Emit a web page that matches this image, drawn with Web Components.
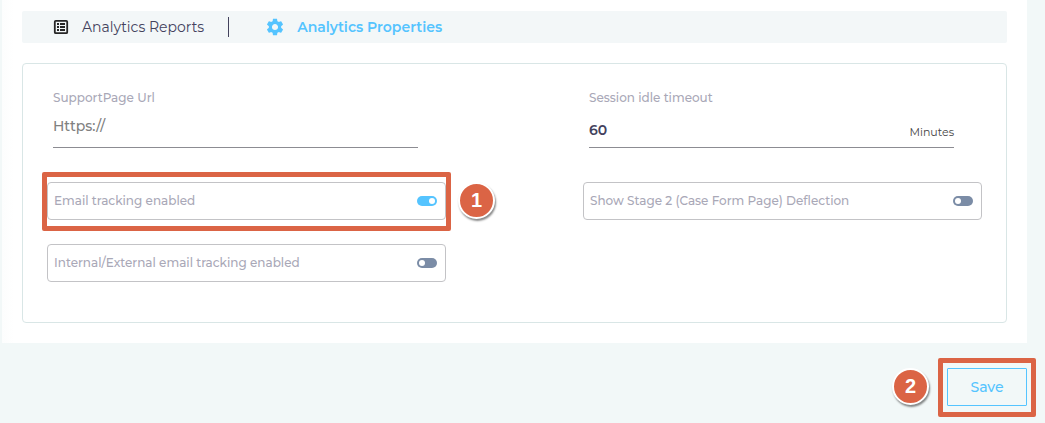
<!DOCTYPE html>
<html lang="en">
<head>
<meta charset="utf-8">
<title>Analytics Properties</title>
<style>
    body {
        margin: 0;
        background: #f2f8f8;
        color: #43425d;
        font-family: Montserrat, Inter, "Open Sans", sans-serif;
        font-weight: 500;
    }
</style>
</head>
<body>
<analytics-page></analytics-page>

<script>
function attach(element, html) {
    const template = document.createElement('template');
    template.innerHTML = html;
    element.attachShadow({mode: 'open'}).appendChild(template.content.cloneNode(true));
}

customElements.define('nav-tab',
class extends HTMLElement {
    constructor() {
        super();
        attach(this, `
        <style>
            :host { display: block; }
            a {
                display: flex;
                align-items: center;
                gap: 13px;
                color: #43425d;
                font-size: 14px;
                font-weight: 400;
                line-height: 20px;
                text-decoration: none;
            }
            :host([active]) a { color: #55c4ff; font-weight: 600; }
        </style>
        <a href="#"><slot name="icon"></slot><span><slot></slot></span></a>
        `);
    }
});

customElements.define('text-field',
class extends HTMLElement {
    constructor() {
        super();
        attach(this, `
        <style>
            :host { display: block; margin: 0 28px 10px 6px; }
            label {
                display: block;
                color: #a9a8b7;
                font-size: 12px;
                line-height: 18px;
            }
            .line {
                display: flex;
                align-items: center;
                box-sizing: border-box;
                height: 41px;
                padding-bottom: 2px;
                border-bottom: 1px solid #8c8c92;
            }
            :host([suffix]) .line { padding: 6px 0 0; }
            input {
                flex: 1;
                min-width: 0;
                padding: 0;
                border: 0;
                outline: 0;
                background: none;
                color: #43425d;
                font: inherit;
                font-size: 14px;
                font-weight: 600;
            }
            input::placeholder { color: #808080; opacity: 1; font-weight: 500; }
            .suffix { padding-top: 4px; color: #444; font-size: 11px; font-weight: 400; }
        </style>
        <label for="box">${this.getAttribute('label')}</label>
        <div class="line">
            <input id="box" type="text" placeholder="${this.getAttribute('placeholder') || ''}" value="${this.getAttribute('value') || ''}">
            <span class="suffix">${this.getAttribute('suffix') || ''}</span>
        </div>
        `);
    }
});

customElements.define('toggle-row',
class extends HTMLElement {
    constructor() {
        super();
        attach(this, `
        <style>
            :host { display: block; }
            label {
                display: flex;
                align-items: center;
                justify-content: space-between;
                box-sizing: border-box;
                height: 38px;
                padding: 0 8px 0 6px;
                border: 1px solid #c3c3c6;
                border-radius: 4px;
                background: #fff;
                color: #a9a8b7;
                font-size: 12px;
                line-height: 16px;
            }
            input {
                appearance: none;
                display: flex;
                align-items: center;
                box-sizing: border-box;
                width: 20px;
                height: 10px;
                margin: 0;
                padding: 0 2px;
                border-radius: 5px;
                background: #7b8ca6;
            }
            input::before {
                content: "";
                width: 6px;
                height: 6px;
                border-radius: 50%;
                background: #fff;
            }
            input:checked { justify-content: flex-end; background: #55c4ff; }
        </style>
        <label><span><slot></slot></span><input type="checkbox" ${this.hasAttribute('checked') ? 'checked' : ''}></label>
        `);
    }
});

// Red frame and numbered badge drawn over whatever is slotted in
customElements.define('step-mark',
class extends HTMLElement {
    constructor() {
        super();
        attach(this, `
        <style>
            :host { display: block; position: relative; }
            .frame {
                position: absolute;
                inset: -10px -5px -11px;
                border: 5px solid #db6445;
                border-radius: 2px;
                box-sizing: border-box;
                pointer-events: none;
            }
            .badge {
                position: absolute;
                top: 0;
                left: calc(100% + 12px);
                display: flex;
                align-items: center;
                justify-content: center;
                box-sizing: border-box;
                width: 37px;
                height: 37px;
                border: 2px solid #fff;
                border-radius: 50%;
                background: #db6445;
                box-shadow: 1px 2px 2px #0007;
                color: #fff;
                font: bold 20px "Liberation Sans", Arial, sans-serif;
            }
            :host([side="left"]) .frame { inset: -10px -9px -11px; }
            :host([side="left"]) .badge { left: auto; right: calc(100% + 18px); }
        </style>
        <slot></slot>
        <div class="frame"></div>
        <div class="badge">${this.getAttribute('step')}</div>
        `);
    }
});

customElements.define('outline-button',
class extends HTMLElement {
    constructor() {
        super();
        attach(this, `
        <style>
            :host { display: block; }
            button {
                display: block;
                width: 80px;
                height: 38px;
                padding: 0;
                border: 1px solid #55c4ff;
                border-radius: 1px;
                background: #f2f8f8;
                color: #55c4ff;
                font: inherit;
                font-size: 14px;
            }
        </style>
        <button type="button"><slot></slot></button>
        `);
    }
});

customElements.define('analytics-page',
class extends HTMLElement {
    constructor() {
        super();
        attach(this, `
        <style>
            :host { display: block; }
            main {
                margin: 0 18px 0 2px;
                padding: 11px 20px 20px;
                background: linear-gradient(to right, #fcfdfd, #fff 12px);
            }
            nav {
                display: flex;
                align-items: center;
                height: 32px;
                padding-left: 31px;
                margin-bottom: 20px;
                background: #f3f7f8;
                border-radius: 2px;
            }
            .divider { width: 1px; height: 20px; margin: 0 37px 0 24px; background: #43425d; }
            svg { display: block; flex: none; }
            .card {
                display: grid;
                grid-template-columns: 1fr 1fr;
                gap: 24px 137px;
                padding: 25px 24px 40px;
                border: 1px solid #d9e6e6;
                border-radius: 4px;
            }
            footer {
                display: flex;
                justify-content: flex-end;
                padding: 25px 18px 17px;
            }
        </style>
        <main>
            <nav>
                <nav-tab>
                    <svg slot="icon" width="16" height="16" viewBox="0 0 16 16">
                        <rect x="1.8" y="1.8" width="12.4" height="12.4" rx="1" fill="none" stroke="#262626" stroke-width="1.8"/>
                        <path d="M4 4h2v2H4zM7 4h5v2H7zM4 7h2v2H4zM7 7h5v2H7zM4 10h2v2H4zM7 10h5v2H7z" fill="#262626"/>
                    </svg>
                    Analytics Reports
                </nav-tab>
                <span class="divider"></span>
                <nav-tab active>
                    <svg slot="icon" width="18" height="18" viewBox="1.5 1.5 21 21">
                        <path fill="#55c4ff" d="M19.14 12.94c.04-.3.06-.61.06-.94 0-.32-.02-.64-.07-.94l2.03-1.58c.18-.14.23-.41.12-.61l-1.92-3.32c-.12-.22-.37-.29-.59-.22l-2.39.96c-.5-.38-1.03-.7-1.62-.94l-.36-2.54c-.04-.24-.24-.41-.48-.41h-3.84c-.24 0-.43.17-.47.41l-.36 2.54c-.59.24-1.13.57-1.62.94l-2.39-.96c-.22-.08-.47 0-.59.22L2.74 8.87c-.12.21-.08.47.12.61l2.03 1.58c-.05.3-.09.63-.09.94s.02.64.07.94l-2.03 1.58c-.18.14-.23.41-.12.61l1.92 3.32c.12.22.37.29.59.22l2.39-.96c.5.38 1.03.7 1.62.94l.36 2.54c.05.24.24.41.48.41h3.84c.24 0 .44-.17.47-.41l.36-2.54c.59-.24 1.13-.56 1.62-.94l2.39.96c.22.08.47 0 .59-.22l1.92-3.32c.12-.22.07-.47-.12-.61l-2.01-1.58zM12 15.6c-1.98 0-3.6-1.62-3.6-3.6s1.62-3.6 3.6-3.6 3.6 1.62 3.6 3.6-1.62 3.6-3.6 3.6z"/>
                    </svg>
                    Analytics Properties
                </nav-tab>
            </nav>
            <div class="card">
                <text-field label="SupportPage Url" placeholder="Https://"></text-field>
                <text-field label="Session idle timeout" value="60" suffix="Minutes"></text-field>
                <step-mark step="1"><toggle-row checked>Email tracking enabled</toggle-row></step-mark>
                <toggle-row>Show Stage 2 (Case Form Page) Deflection</toggle-row>
                <toggle-row>Internal/External email tracking enabled</toggle-row>
            </div>
        </main>
        <footer>
            <step-mark step="2" side="left"><outline-button>Save</outline-button></step-mark>
        </footer>
        `);
    }
});
</script>
</body>
</html>
